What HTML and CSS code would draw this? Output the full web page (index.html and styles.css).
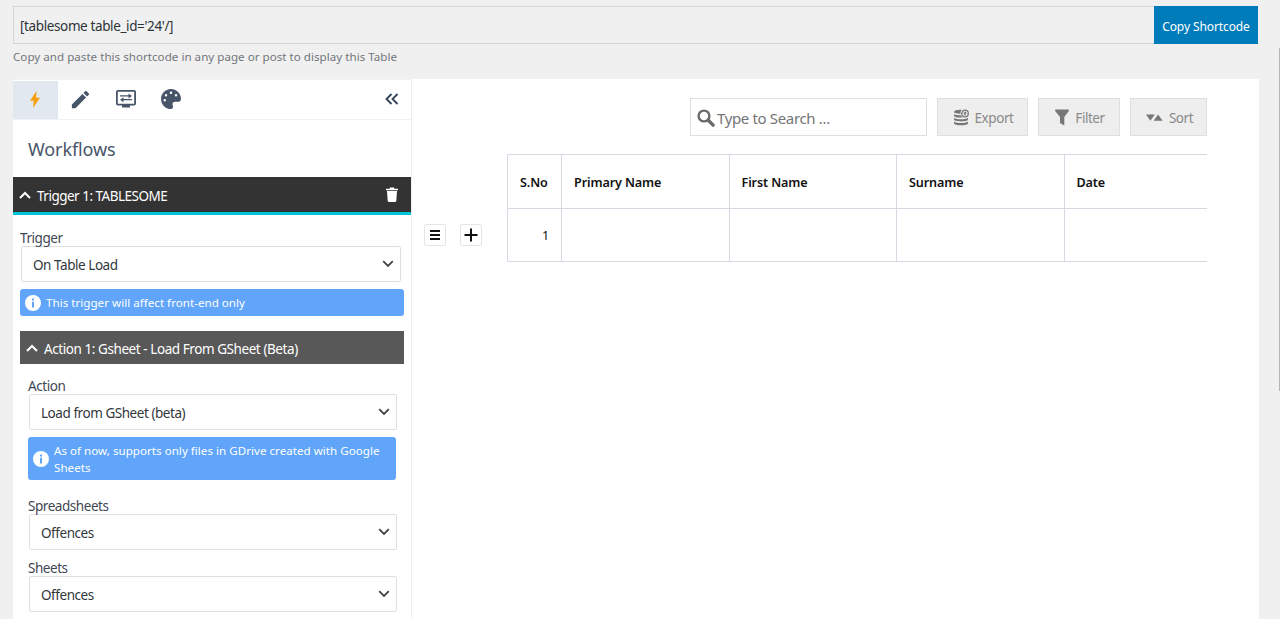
FILE: index.html
```html
<!DOCTYPE html>
<html lang="en">
<head>
    <meta charset="UTF-8">
    <meta name="viewport" content="width=device-width, initial-scale=1.0">
    <title>Edit Table - Tablesome</title>
    <link rel="stylesheet" href="styles.css">
</head>
<body>
    <div class="page">
        <div class="shortcode">
            <div class="shortcode-text"><span>[tablesome table_id='24'/]</span></div>
            <button type="button" class="shortcode-copy"><span>Copy Shortcode</span></button>
        </div>
        <p class="shortcode-help"><span>Copy and paste this shortcode in any page or post to display this Table</span></p>

        <div class="editor">
            <aside class="sidebar">
                <nav class="tabs">
                    <div class="tab active">
                        <svg width="10" height="17" viewBox="0 0 10 17"><path d="M6.5 0 0 9.8h3.8L3 17l7-10.3H6.1z" fill="#f59e0b"/></svg>
                    </div>
                    <div class="tab">
                        <svg width="23" height="23" viewBox="0 0 24 24"><path d="M3 17.25V21h3.75L17.81 9.94l-3.75-3.75zM20.71 7.04a1 1 0 0 0 0-1.41l-2.34-2.34a1 1 0 0 0-1.41 0l-1.83 1.83 3.75 3.75z"/></svg>
                    </div>
                    <div class="tab">
                        <svg width="20" height="18" viewBox="0 0 20 18"><rect x=".9" y=".9" width="18.2" height="13.7" rx="1" fill="none" stroke="#475569" stroke-width="1.8"/><path d="M6 14h8v3.5H6zM4 5.2h8.5V3.4L16 6l-3.5 2.4V6.6H4zM16 8.9H7.5V7.2L4 9.7l3.5 2.5v-1.9H16z"/></svg>
                    </div>
                    <div class="tab">
                        <svg width="20" height="20" viewBox="0 0 512 512"><path d="M204 6C105 25 25 104 6 203c-37 194 132 327 255 308 39-6 58-52 40-88-22-43 9-94 58-94h79c41 0 74-34 74-74C511 95 366-26 204 6zM96 320a32 32 0 1 1 0-64 32 32 0 0 1 0 64zm32-128a32 32 0 1 1 0-64 32 32 0 0 1 0 64zm128-64a32 32 0 1 1 0-64 32 32 0 0 1 0 64zm128 64a32 32 0 1 1 0-64 32 32 0 0 1 0 64z"/></svg>
                    </div>
                    <div class="collapse">
                        <svg width="14" height="12" viewBox="0 0 14 12"><path d="M6.5 1 1.5 6l5 5M12.5 1l-5 5 5 5"/></svg>
                    </div>
                </nav>
                <h2 class="sidebar-title"><span>Workflows</span></h2>

                <div class="trigger-header">
                    <svg class="caret" width="12" height="8" viewBox="0 0 12 8"><path d="m1 7 5-5 5 5"/></svg>
                    <span>Trigger 1: TABLESOME</span>
                    <svg class="trash" width="12" height="15" viewBox="0 0 12 15"><path d="M0 1.8h3.3L4.2.5h3.6l.9 1.3H12v1.4H0zM1 4.1h10l-.7 9.6q-.1 1.3-1.3 1.3H3q-1.2 0-1.3-1.3z"/></svg>
                </div>

                <div class="trigger-body">
                    <label class="label"><span>Trigger</span></label>
                    <div class="select">
                        <span>On Table Load</span>
                        <svg width="12" height="8" viewBox="0 0 12 8"><path d="m1.2 1.2 4.8 4.8 4.8-4.8"/></svg>
                    </div>
                    <div class="info">
                        <svg width="16" height="16" viewBox="0 0 16 16"><circle cx="8" cy="8" r="8" fill="#fff"/><path d="M7 3.5h2v2H7zM7 6.7h2v5.8H7z" fill="#60a5fa"/></svg>
                        <span>This trigger will affect front-end only</span>
                    </div>

                    <div class="action-header">
                        <svg class="caret" width="12" height="8" viewBox="0 0 12 8"><path d="m1 7 5-5 5 5"/></svg>
                        <span>Action 1: Gsheet - Load From GSheet (Beta)</span>
                    </div>

                    <div class="action-body">
                        <label class="label"><span>Action</span></label>
                        <div class="select">
                            <span>Load from GSheet (beta)</span>
                            <svg width="12" height="8" viewBox="0 0 12 8"><path d="m1.2 1.2 4.8 4.8 4.8-4.8"/></svg>
                        </div>
                        <div class="info info-tall">
                            <svg width="16" height="16" viewBox="0 0 16 16"><circle cx="8" cy="8" r="8" fill="#fff"/><path d="M7 3.5h2v2H7zM7 6.7h2v5.8H7z" fill="#60a5fa"/></svg>
                            <span>As of now, supports only files in GDrive created with Google<br>Sheets</span>
                        </div>
                        <label class="label"><span>Spreadsheets</span></label>
                        <div class="select">
                            <span>Offences</span>
                            <svg width="12" height="8" viewBox="0 0 12 8"><path d="m1.2 1.2 4.8 4.8 4.8-4.8"/></svg>
                        </div>
                        <label class="label label-next"><span>Sheets</span></label>
                        <div class="select">
                            <span>Offences</span>
                            <svg width="12" height="8" viewBox="0 0 12 8"><path d="m1.2 1.2 4.8 4.8 4.8-4.8"/></svg>
                        </div>
                    </div>
                </div>
            </aside>

            <main class="content">
                <div class="toolbar">
                    <div class="search">
                        <svg width="18" height="18" viewBox="0 0 18 18"><circle cx="7" cy="7" r="5.4" fill="none" stroke="#6b6b6b" stroke-width="2.4"/><path d="m11.5 11.5 4.6 4.6" stroke="#6b6b6b" stroke-width="3.4" stroke-linecap="round"/></svg>
                        <span>Type to Search ...</span>
                    </div>
                    <button type="button" class="tool tool-export">
                        <svg width="15" height="17" viewBox="0 0 15 17"><path d="M0 3C0 1.6 3 .8 6.8.8h1A4.800 4.800 0 0 0 6.400 4.700C3 4.700 0 4.200 0 3zM0 5.200c1.700.8 4 1.100 6.700 1.100.4.900 1 1.600 1.800 2.100C4.500 8.900 0 8.400 0 6.800zM0 9c3 1.700 11 1.700 14 0v1.500c0 2.500-14 2.500-14 0zM0 12.700c3 1.700 11 1.700 14 0v1.600c0 2.700-14 2.700-14 0z"/><circle cx="11" cy="4.5" r="3.3" fill="none" stroke="#777" stroke-width="1.3"/><path d="m11 2.300 1.900 2.200h-1.200v2.100h-1.400V4.500H9.100z"/></svg>
                        <span>Export</span>
                    </button>
                    <button type="button" class="tool tool-filter">
                        <svg width="14" height="17" viewBox="0 0 14 17"><path d="M.4.6h13.200q.6.8 0 1.600L9.300 8v8.500L5 14V8L.4 2.200Q-.3 1.400.4.600z"/></svg>
                        <span>Filter</span>
                    </button>
                    <button type="button" class="tool tool-sort">
                        <svg width="17" height="7" viewBox="0 0 17 7"><path d="M0 .5h8.800L4.400 6.700zM7.600 6.700h9L12.100.5z"/></svg>
                        <span>Sort</span>
                    </button>
                </div>

                <div class="table-area">
                    <div class="row-tools">
                        <div class="row-tool">
                            <svg width="12" height="12" viewBox="0 0 12 12"><path d="M1 2h10M1 6h10M1 10h10" stroke="#111" stroke-width="2"/></svg>
                        </div>
                        <div class="row-tool">
                            <svg width="14" height="14" viewBox="0 0 14 14"><path d="M7 .5v13M.5 7h13" stroke="#111" stroke-width="2"/></svg>
                        </div>
                    </div>
                    <div class="table-scroll">
                        <table>
                            <thead>
                                <tr>
                                    <th class="serial"><span>S.No</span></th>
                                    <th><span>Primary Name</span></th>
                                    <th><span>First Name</span></th>
                                    <th><span>Surname</span></th>
                                    <th><span>Date</span></th>
                                </tr>
                            </thead>
                            <tbody>
                                <tr>
                                    <td class="serial"><span>1</span></td>
                                    <td></td>
                                    <td></td>
                                    <td></td>
                                    <td></td>
                                </tr>
                            </tbody>
                        </table>
                    </div>
                </div>
            </main>
        </div>
    </div>
    <div class="scroll-thumb"></div>
</body>
</html>
```
FILE: styles.css
```css
:root {
    --page: #f0f0f0;
    --text: #3f4754;
    --text-muted: #72777c;
    --icon: #475569;
    --border: #dcdfe6;
    --primary: #007cba;
    --info: #60a5fa;
}

* {
    box-sizing: border-box;
}

body {
    margin: 0;
    height: 619px;
    overflow: hidden;
    background: var(--page);
    color: var(--text);
    font-family: "Noto Sans", "Open Sans", sans-serif;
    font-size: 13.5px;
    letter-spacing: -0.45px;
}

svg {
    display: block;
    flex: none;
}

span {
    white-space: nowrap;
}

button {
    font-family: inherit;
    letter-spacing: inherit;
}

.page {
    padding: 6px 21px 0 13px;
}

/* Shortcode bar */
.shortcode {
    display: flex;
    width: 1245px;
    height: 38px;
}

.shortcode-text {
    flex: 1;
    display: flex;
    align-items: center;
    padding: 2px 6px 0;
    border: 1px solid #d2d6da;
    border-right: none;
    color: #2c3338;
    letter-spacing: -0.38px;
}

.shortcode-copy {
    width: 104px;
    padding: 2px 0 0;
    border: none;
    background: var(--primary);
    color: #fff;
    font-size: 12px;
    letter-spacing: -0.1px;
}

.shortcode-help {
    margin: 3px 0 0;
    height: 32px;
    line-height: 19px;
    color: var(--text-muted);
    font-size: 11.6px;
    letter-spacing: 0.02px;
}

.editor {
    display: flex;
    height: 560px;
    background: #fff;
}

/* Sidebar */
.sidebar {
    width: 399px;
    flex: none;
    border-top: 1px solid #f1f3f5;
    border-right: 1px solid #eceef0;
}

.tabs {
    display: flex;
    height: 40px;
    padding-top: 1px;
    border-bottom: 1px solid #f0f2f4;
}

.tab {
    display: flex;
    align-items: center;
    justify-content: center;
    width: 45.4px;
    padding: 0 1px 2px 0;
}

.tab.active {
    background: #e2e8f0;
}

.tab svg {
    fill: var(--icon);
}

.collapse {
    display: flex;
    align-items: center;
    margin-left: auto;
    padding: 0 12px 2px 0;
}

.collapse svg {
    fill: none;
    stroke: #334155;
    stroke-width: 1.8;
}

.sidebar-title {
    margin: 0;
    height: 57px;
    padding: 2px 0 0 15px;
    line-height: 55px;
    font-size: 18px;
    font-weight: 400;
    letter-spacing: -0.1px;
    color: var(--icon);
}

.caret {
    fill: none;
    stroke: #fff;
    stroke-width: 2;
}

.trigger-header {
    display: flex;
    align-items: center;
    gap: 6px;
    height: 38px;
    padding: 0 13px 0 6px;
    background: #333;
    border-bottom: 3px solid #00c3d7;
    color: #fff;
    letter-spacing: -0.5px;
}

.trigger-header span,
.action-header span,
.select span {
    padding-top: 2px;
}

.trash {
    margin-left: auto;
    fill: #fff;
}

.trigger-body {
    padding: 13px 7px 0;
}

.label {
    display: block;
    height: 18px;
    line-height: 20px;
}

.select {
    display: flex;
    align-items: center;
    justify-content: space-between;
    height: 36px;
    margin: 0 0 0 1px;
    padding: 0 6px 0 11px;
    border: 1px solid var(--border);
    border-radius: 2px;
    color: #32373c;
}

.trigger-body > .select {
    margin-right: 3px;
}

.select svg {
    fill: none;
    stroke: #444;
    stroke-width: 1.8;
}

.info {
    display: flex;
    align-items: center;
    gap: 5px;
    height: 27px;
    margin-top: 7px;
    padding: 0 5px;
    border-radius: 3px;
    background: var(--info);
    color: #fff;
    font-size: 11.6px;
    line-height: 17px;
    letter-spacing: 0.02px;
}

.info-tall {
    height: 43px;
    margin: 7px 1px 16px 0;
}

.action-header {
    display: flex;
    align-items: center;
    gap: 6px;
    height: 33px;
    margin-top: 15px;
    padding: 0 7px 0 6px;
    background: #585858;
    color: #fff;
    letter-spacing: -0.43px;
}

.action-body {
    padding: 12px 7px 0 8px;
}

.label-next {
    margin-top: 8px;
}

/* Table side */
.content {
    flex: 1;
    padding: 19px 52px 0 12px;
}

.toolbar {
    display: flex;
    justify-content: flex-end;
    gap: 10px;
    height: 38px;
}

.search {
    display: flex;
    align-items: center;
    gap: 2px;
    width: 237px;
    padding: 1px 6px 0;
    border: 1px solid #dfdfdf;
    color: #757575;
    font-size: 15px;
    letter-spacing: -0.35px;
}

.tool {
    display: flex;
    align-items: center;
    justify-content: center;
    gap: 6px;
    padding: 1px 0 0 2px;
    border: 1px solid #dfdfdf;
    background: #eee;
    color: #8a8a8a;
    font-size: 13.5px;
}

.tool svg {
    fill: #777;
}

.tool-export {
    width: 91px;
}

.tool-filter {
    width: 82px;
}

.tool-sort {
    width: 77px;
}

.table-area {
    display: flex;
    margin-top: 18px;
}

.row-tools {
    display: flex;
    gap: 14px;
    width: 83px;
    flex: none;
    padding-top: 70px;
}

.row-tool {
    display: flex;
    align-items: center;
    justify-content: center;
    width: 22px;
    height: 22px;
    border: 1px solid #e5e5e5;
    border-radius: 2px;
}

.table-scroll {
    width: 700px;
    overflow: hidden;
}

table {
    width: 725px;
    table-layout: fixed;
    border-collapse: collapse;
}

th,
td {
    height: 53.5px;
    padding: 2px 12px 0;
    border: 1px solid #d5d9e2;
    color: #111;
    font-size: 12.6px;
    letter-spacing: -0.12px;
    text-align: left;
}

th {
    font-weight: 600;
}

.serial {
    width: 54px;
    white-space: nowrap;
}

td.serial {
    text-align: right;
}

.scroll-thumb {
    position: absolute;
    top: 48px;
    right: 0;
    width: 1px;
    height: 343px;
    background: #b5b5b5;
}
```
